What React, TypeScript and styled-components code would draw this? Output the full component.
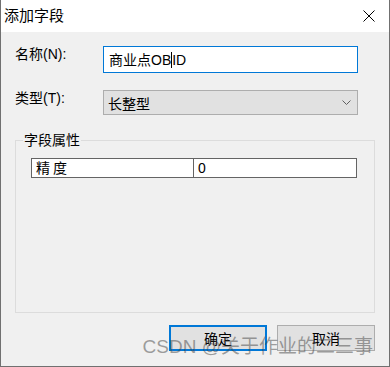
import styled, { createGlobalStyle } from 'styled-components';

const GlobalStyle = createGlobalStyle`
  html, body {
    margin: 0;
    padding: 0;
    background: #ffffff;
  }
  body {
    font-family: 'Liberation Sans', 'Noto Sans CJK SC', sans-serif;
    font-size: 14px;
    color: #000;
  }
`;

const Window = styled.div`
  position: relative;
  width: 390px;
  height: 367px;
  box-sizing: border-box;
  display: flex;
  flex-direction: column;
  border: 1px solid #707070;
  border-top: none;
  overflow: hidden;
`;

const TitleBar = styled.div`
  height: 32px;
  flex: none;
  display: flex;
  align-items: center;
  justify-content: space-between;
  padding: 0 14px 0 3px;
  background: #ffffff;
`;

const Title = styled.span`
  font-size: 15px;
  line-height: 32px;
`;

const CloseButton = styled.button`
  width: 12px;
  height: 12px;
  padding: 0;
  border: none;
  background: none;
  display: flex;
  margin-top: 0;
`;

const Body = styled.div`
  flex: 1;
  display: flex;
  flex-direction: column;
  background: #f0f0f0;
  padding: 14px 14px 15px 14px;
`;

const FormRow = styled.div<{ $gap?: number }>`
  display: grid;
  grid-template-columns: 88px 255px;
  align-items: start;
  margin-bottom: ${(p) => p.$gap ?? 0}px;
`;

const Label = styled.label`
  line-height: 16px;
  white-space: nowrap;
`;

const TextField = styled.div`
  box-sizing: border-box;
  height: 27px;
  border: 1px solid #0078d7;
  background: #ffffff;
  padding: 1px 5px 0;
  line-height: 22px;
  white-space: nowrap;
  display: flex;
  align-items: center;
`;

const Caret = styled.span`
  display: inline-block;
  width: 1px;
  height: 16px;
  background: #000;
`;

const ComboBox = styled.div`
  box-sizing: border-box;
  height: 25px;
  border: 1px solid #adadad;
  background: #e1e1e1;
  padding: 0 6px 0 4px;
  display: flex;
  align-items: center;
  justify-content: space-between;
`;

const Group = styled.fieldset`
  flex: 1;
  min-height: 0;
  margin: 15px 0 0 0;
  padding: 0;
  border: 1px solid #dcdcdc;
  min-inline-size: 0;
`;

const Legend = styled.legend`
  margin-left: 7px;
  padding: 0 1px;
  line-height: 20px;
  font-size: 14px;
`;

const PropertyTable = styled.div`
  margin: 8px 17px 0 15px;
  height: 20px;
  box-sizing: border-box;
  border: 1px solid #646464;
  background: #ffffff;
  display: grid;
  grid-template-columns: 162px 1fr;
`;

const Cell = styled.div<{ $divider?: boolean; $spacing?: number }>`
  line-height: 18px;
  padding-left: 4px;
  letter-spacing: ${(p) => p.$spacing ?? 0}px;
  border-right: ${(p) => (p.$divider ? '1px solid #646464' : 'none')};
`;

const ButtonRow = styled.div`
  display: flex;
  justify-content: flex-end;
  gap: 10px;
  margin-top: 12px;
`;

const DialogButton = styled.button<{ $primary?: boolean }>`
  width: 98px;
  height: 26px;
  box-sizing: border-box;
  margin: 0;
  padding: 0;
  font-family: inherit;
  font-size: 14px;
  color: #000;
  background: #e1e1e1;
  border: ${(p) => (p.$primary ? '2px solid #0078d7' : '1px solid #adadad')};
`;

const Watermark = styled.div`
  position: absolute;
  right: 16px;
  top: 336px;
  font-size: 19px;
  line-height: 22px;
  color: rgba(70, 70, 70, 0.5);
  white-space: nowrap;
  pointer-events: none;
`;

export default function App() {
  return (
    <>
      <GlobalStyle />
      <Window>
        <TitleBar>
          <Title>添加字段</Title>
          <CloseButton aria-label='关闭'>
            <svg width='12' height='12' viewBox='0 0 12 12'>
              <path d='M0.5 0.5 L11.5 11.5 M11.5 0.5 L0.5 11.5' stroke='#000' strokeWidth='1' />
            </svg>
          </CloseButton>
        </TitleBar>
        <Body>
          <FormRow $gap={17}>
            <Label>名称(N):</Label>
            <TextField>
              商业点OB<Caret />ID
            </TextField>
          </FormRow>
          <FormRow>
            <Label>类型(T):</Label>
            <ComboBox>
              <span>长整型</span>
              <svg width='9' height='5' viewBox='0 0 9 5'>
                <path d='M0.5 0.5 L4.5 4.5 L8.5 0.5' stroke='#606060' fill='none' strokeWidth='1' />
              </svg>
            </ComboBox>
          </FormRow>
          <Group>
            <Legend>字段属性</Legend>
            <PropertyTable>
              <Cell $divider $spacing={3}>
                精度
              </Cell>
              <Cell>0</Cell>
            </PropertyTable>
          </Group>
          <ButtonRow>
            <DialogButton $primary>确定</DialogButton>
            <DialogButton>取消</DialogButton>
          </ButtonRow>
        </Body>
        <Watermark>CSDN @关于作业的二三事</Watermark>
      </Window>
    </>
  );
}
